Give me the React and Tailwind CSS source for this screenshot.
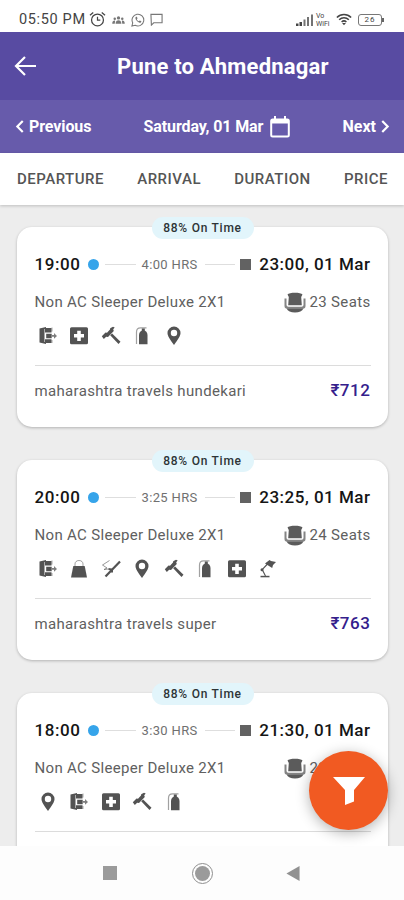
import React from 'react';

const ExitIcon = () => (
  <svg viewBox="0 0 20 20" className="h-5 w-5" fill="currentColor">
    <path d="M1.500 2.500 8 1v2H5.500v12.500H8V18l-6.500-1.500z" />
    <path d="M5.500 2h8v4.500h-8zM8.200 7.700h5.500v4.600H8.200zM7 13.300h6.500V17H7z" />
    <path d="M2 3h4v13H2z" />
    <path d="M6.500 3v13" stroke="#aaa" strokeWidth="1" />
    <path d="M13.500 1.500h1v4h-1zM13.500 14h1v3h-1z" opacity=".5" />
    <path d="M14 9h2V7l3 2.900-3 2.900v-2h-2z" opacity=".75" />
  </svg>
);

const FirstAidIcon = () => (
  <svg viewBox="0 0 20 20" className="h-5 w-5" fill="currentColor" fillRule="evenodd">
    <path d="M2.500 1.200h15A1.500 1.500 0 0 1 19 2.700v14a1.500 1.500 0 0 1-1.500 1.500h-15A1.500 1.500 0 0 1 1 16.700v-14a1.500 1.500 0 0 1 1.500-1.500zM8.200 4.700V8H5v3.600h3.200v3.300h3.600v-3.300H15V8h-3.200V4.700z" />
  </svg>
);

const HammerIcon = () => (
  <svg viewBox="0 0 20 20" className="h-5 w-5" fill="currentColor">
    <path d="M.8 10.200 4.500 6.500 6 6.800l3-3.200.2-1.400L12 .8l1.700.7-1.500 1.800.6 1.700L7 11l-1.800-.3-2.400 2.300z" />
    <path d="m9.200 9.300 1.900-1.800 8.400 8.200-2 2.200z" />
  </svg>
);

const ExtinguisherIcon = () => (
  <svg viewBox="0 0 20 20" className="h-5 w-5" fill="currentColor">
    <path d="M14.500 1.800H8.500C6 1.800 4.500 3.500 4.500 6v12" fill="none" stroke="currentColor" strokeWidth="1.200" opacity=".55" />
    <path d="M9.800 2.500h3v2.800h-3z" />
    <path d="M7 9c0-2.700 1.700-4.500 4.300-4.500S15.500 6.300 15.500 9v9.300H7z" />
  </svg>
);

const PinIcon = () => (
  <svg viewBox="0 0 20 20" className="h-5 w-5" fill="currentColor" fillRule="evenodd">
    <path d="M10 .5a6.500 6.500 0 0 0-6.500 6.500c0 3 2.500 6.500 6.500 12 4-5.500 6.500-9 6.500-12A6.500 6.500 0 0 0 10 .5zm0 3.300a3.200 3.200 0 1 1 0 6.400 3.200 3.200 0 0 1 0-6.400z" />
  </svg>
);

const BagIcon = () => (
  <svg viewBox="0 0 20 20" className="h-5 w-5" fill="currentColor">
    <path d="M6 8V5C6 3 7.500 1.500 10 1.500S14 3 14 5v3" fill="none" stroke="currentColor" strokeWidth="1" opacity=".55" />
    <path d="M4.300 7h11.400L18 18.500H2z" />
  </svg>
);

const ChargerIcon = () => (
  <svg viewBox="0 0 20 20" className="h-5 w-5" fill="none" stroke="currentColor">
    <path d="M8.500 1.500 1.500 6l4.500 3-3 1.500 4.500-.5" strokeWidth="1" opacity=".6" />
    <path d="M19 2.500 4.500 17.500" strokeWidth="2.200" />
    <path d="m7.500 10 3.500.5v3" strokeWidth="2" />
  </svg>
);

const LampIcon = () => (
  <svg viewBox="0 0 20 20" className="h-5 w-5" fill="currentColor">
    <path d="M7 4.500 11.500 1l1.500 1 5 1-3 3-.8 3z" />
    <path d="M9.500 5 4.200 10.500 7.500 17" fill="none" stroke="currentColor" strokeWidth="1.100" />
    <circle cx="4" cy="10.700" r="1.500" />
    <path d="M2.500 16.800h9v1.500h-9z" />
  </svg>
);

const SeatIcon = () => (
  <svg viewBox="0 0 22 21" className="h-[21px] w-[22px]" fill="#5b5b5b">
    <path d="M3.500 2.500C5 .3 17 .3 18.500 2.500L17.200 5l.6 8.300H4.200L4.800 5z" />
    <path d="M.5 6.500h2V13q0 1.800 2 1.800h13q2 0 2-1.800V6.500h2V14q0 2.800-2.800 2.800H3.300Q.5 16.800.5 14z" opacity=".75" />
    <path d="M2.500 16.500h17q-2 4-8.500 4t-8.500-4z" />
  </svg>
);

const icons = {
  exit: ExitIcon,
  aid: FirstAidIcon,
  hammer: HammerIcon,
  extinguisher: ExtinguisherIcon,
  pin: PinIcon,
  bag: BagIcon,
  charger: ChargerIcon,
  lamp: LampIcon,
};

const buses = [
  {
    departure: '19:00',
    duration: '4:00 HRS',
    arrival: '23:00, 01 Mar',
    seats: '23 Seats',
    amenities: ['exit', 'aid', 'hammer', 'extinguisher', 'pin'],
    operator: 'maharashtra travels hundekari',
    price: '₹712',
  },
  {
    departure: '20:00',
    duration: '3:25 HRS',
    arrival: '23:25, 01 Mar',
    seats: '24 Seats',
    amenities: ['exit', 'bag', 'charger', 'pin', 'hammer', 'extinguisher', 'aid', 'lamp'],
    operator: 'maharashtra travels super',
    price: '₹763',
  },
  {
    departure: '18:00',
    duration: '3:30 HRS',
    arrival: '21:30, 01 Mar',
    seats: '22 Seats',
    amenities: ['pin', 'exit', 'aid', 'hammer', 'extinguisher'],
  },
];

const StatusBar = () => (
  <div className="flex h-8 shrink-0 items-center bg-white pt-[7px] pr-[20px] pl-[19px] text-[#444]">
    <span className="w-[70px] pt-px text-[14.500px] tracking-[0.650px] whitespace-nowrap">05:50 PM</span>
    <svg viewBox="0 0 18 18" className="h-[17px] w-[17px]" fill="none" stroke="currentColor" strokeWidth="1.300">
      <circle cx="9" cy="9.500" r="6.300" />
      <path d="M9 6v3.700h3M1 4.500 4.500 1.500M17 4.500l-3.500-3" />
    </svg>
    <svg viewBox="0 0 16 12" className="ml-[5px] h-[10px] w-[15px]" fill="#777">
      <circle cx="8" cy="3.500" r="2" />
      <circle cx="3.500" cy="4.500" r="1.500" />
      <circle cx="12.500" cy="4.500" r="1.500" />
      <path d="M4.500 10.500c0-5.500 7-5.500 7 0zM.5 10.500c0-3 1.500-4 3.500-3.700L3.500 10.500zM15.500 10.500c0-3-1.500-4-3.500-3.700l.5 3.700z" />
    </svg>
    <svg viewBox="0 0 16 16" className="ml-[5px] h-[14px] w-[14px]" fill="none" stroke="#777" strokeWidth="1.200">
      <path d="m1 15 1-3.700A6.700 6.700 0 1 1 4.700 14z" />
      <path d="M5 5c0 3 3 6 6 6l1-1.500L10 8.500l-1 .8C8 9 7 8 6.700 7l.8-1L6.500 4z" fill="#777" stroke="none" />
    </svg>
    <svg viewBox="0 0 14 14" className="ml-[5px] h-[13px] w-[13px]" fill="none" stroke="#777" strokeWidth="1.200">
      <path d="M1 1.500h12v9H4L1.500 13z" />
    </svg>
    <svg viewBox="0 0 18 12" className="ml-auto h-3 w-[18px]" fill="#444">
      <path d="M0 9.500h2.500V12H0zM3.500 8H6v4H3.500z" />
      <path d="M7.500 5.500h2V12h-2zM11 3h2v9h-2zM15 .5h2V12h-2z" opacity=".75" />
    </svg>
    <div className="ml-[2px] flex w-[15px] flex-col text-[7px] leading-[8px] text-[#444]">
      <span>Vo</span>
      <span>WiFi</span>
    </div>
    <svg viewBox="0 0 18 14" className="ml-[5px] h-[13px] w-[16px]" fill="none" stroke="#444" strokeWidth="1.800">
      <path d="M1 4.700c4.500-4.500 11.500-4.500 16 0M3.600 7.300c3-3 7.800-3 10.800 0M6.300 9.800c1.700-1.500 3.700-1.500 5.400 0" />
      <path d="M9 13.500 6.800 10.800h4.400z" fill="#444" stroke="none" />
    </svg>
    <div className="ml-[6px] flex items-center">
      <div className="flex h-3 w-[24px] items-center justify-center rounded-[3px] border border-[#777] text-[8px] tracking-[1px]">26</div>
      <div className="h-1 w-0.5 bg-[#666]" />
    </div>
  </div>
);

const BusCard = ({ bus }) => (
  <div className="relative h-[200px] shrink-0 rounded-[15px] bg-white px-[17.500px] shadow-[0_1px_3px_rgba(0,0,0,0.25)]">
    <div className="absolute -top-[10px] left-1/2 flex h-[22px] w-[102px] -translate-x-1/2 items-center justify-center rounded-full bg-[#e2f5fb] text-[12px] font-medium tracking-[0.750px] whitespace-nowrap text-[#2d3436]">
      88% On Time
    </div>

    <div className="flex h-[75px] items-center whitespace-nowrap">
      <span className="w-[53px] text-[17px] font-medium tracking-[0.600px] text-[#151515]">{bus.departure}</span>
      <span className="h-[11px] w-[11px] rounded-full bg-[#36a4ea]" />
      <span className="ml-[6px] h-px w-[31px] bg-[#dedede]" />
      <span className="ml-[6px] w-[57px] text-[13px] tracking-[0.350px] text-[#707070]">{bus.duration}</span>
      <span className="ml-[6px] h-px w-[30px] bg-[#dedede]" />
      <span className="ml-[5px] h-[11px] w-[11px] bg-[#626262]" />
      <span className="ml-auto text-[17px] font-medium tracking-[0.500px] text-[#151515]">{bus.arrival}</span>
    </div>

    <div className="flex h-0 items-center justify-between text-[15px] whitespace-nowrap text-[#606060]">
      <span className="tracking-[0.320px]">Non AC Sleeper Deluxe 2X1</span>
      <span className="flex items-center gap-[3px] tracking-[0.350px]">
        <SeatIcon />
        {bus.seats}
      </span>
    </div>

    <div className="mt-[24px] flex h-5 gap-[11.500px] pl-[3px] text-[#535353]">
      {bus.amenities.map((name) => {
        const Icon = icons[name];
        return <Icon key={name} />;
      })}
    </div>

    <div className="mt-[19px] flex h-[51px] items-center justify-between border-t border-[#dcdcdc] whitespace-nowrap">
      {bus.operator && (
        <>
          <span className="text-[15px] tracking-[0.330px] text-[#606060]">{bus.operator}</span>
          <span className="text-[17px] font-medium tracking-[0.550px] text-[#34208c]">{bus.price}</span>
        </>
      )}
    </div>
  </div>
);

const App = () => {
  return (
    <div className="relative flex h-[900px] w-[404px] flex-col overflow-hidden bg-[#ededed] font-['Roboto',sans-serif]">
      <StatusBar />

      <header className="flex h-[68px] shrink-0 items-center bg-[#584ba2] pl-[14px] text-white">
        <svg viewBox="0 0 22 20" className="h-5 w-[22px]" fill="none" stroke="currentColor" strokeWidth="2.200">
          <path d="M22 10H2M11 1 2 10l9 9" />
        </svg>
        <h1 className="ml-[81px] text-[22px] font-bold tracking-[0.200px] whitespace-nowrap">Pune to Ahmednagar</h1>
      </header>

      <div className="flex h-[53px] shrink-0 items-center justify-between bg-[#675bab] pr-[14px] pl-[15px] text-[16px] font-bold whitespace-nowrap text-white">
        <span className="flex items-center gap-[5px] tracking-[-0.100px]">
          <svg viewBox="0 0 8 12" className="h-[13px] w-[9px]" fill="none" stroke="currentColor" strokeWidth="2">
            <path d="M7 1 2 6l5 5" />
          </svg>
          Previous
        </span>
        <span className="flex items-center gap-[7px] tracking-[-0.120px]">
          Saturday, 01 Mar
          <svg viewBox="0 0 20 22" className="h-[22px] w-5" fill="none" stroke="currentColor" strokeWidth="2">
            <rect x="1.200" y="3.500" width="17.600" height="17" rx="1.500" />
            <path d="M1 5.500h18" strokeWidth="4" />
            <path d="M5 0v4M15 0v4" />
          </svg>
        </span>
        <span className="flex items-center gap-[5px]">
          Next
          <svg viewBox="0 0 8 12" className="h-[13px] w-[9px]" fill="none" stroke="currentColor" strokeWidth="2">
            <path d="m1 1 5 5-5 5" />
          </svg>
        </span>
      </div>

      <nav className="z-10 flex h-[52px] shrink-0 items-center justify-between bg-white pr-[16px] pl-[17px] text-[15px] font-medium tracking-[0.500px] text-[#555] shadow-[0_1px_3px_rgba(0,0,0,0.2)]">
        <span>DEPARTURE</span>
        <span>ARRIVAL</span>
        <span>DURATION</span>
        <span>PRICE</span>
      </nav>

      <main className="flex min-h-0 flex-1 flex-col gap-[33px] overflow-hidden pt-[22px] pr-[16px] pl-[17px]">
        {buses.map((bus) => (
          <BusCard key={bus.departure} bus={bus} />
        ))}
      </main>

      <button className="absolute right-[16px] bottom-[70px] flex h-[79px] w-[79px] items-center justify-center rounded-full bg-[#f15a22] shadow-[0_3px_14px_rgba(0,0,0,0.3)]">
        <svg viewBox="0 0 32 28" className="h-7 w-8" fill="#fff">
          <path d="M0 0h32L21 13v11.500L12 28V13z" />
        </svg>
      </button>

      <footer className="flex h-[54px] shrink-0 items-center bg-[#fdfdfd] pl-[103px]">
        <div className="h-[14px] w-[14px] bg-[#9b9b9b]" />
        <div className="ml-[75px] flex h-[21px] w-[21px] items-center justify-center rounded-full border border-[#8f8f8f]">
          <div className="h-[15px] w-[15px] rounded-full bg-[#9b9b9b]" />
        </div>
        <svg viewBox="0 0 14 16" className="ml-[73px] h-[15px] w-[14px]" fill="#919191">
          <path d="M14 0v16L0 8z" />
        </svg>
      </footer>
    </div>
  );
};

export default App;
